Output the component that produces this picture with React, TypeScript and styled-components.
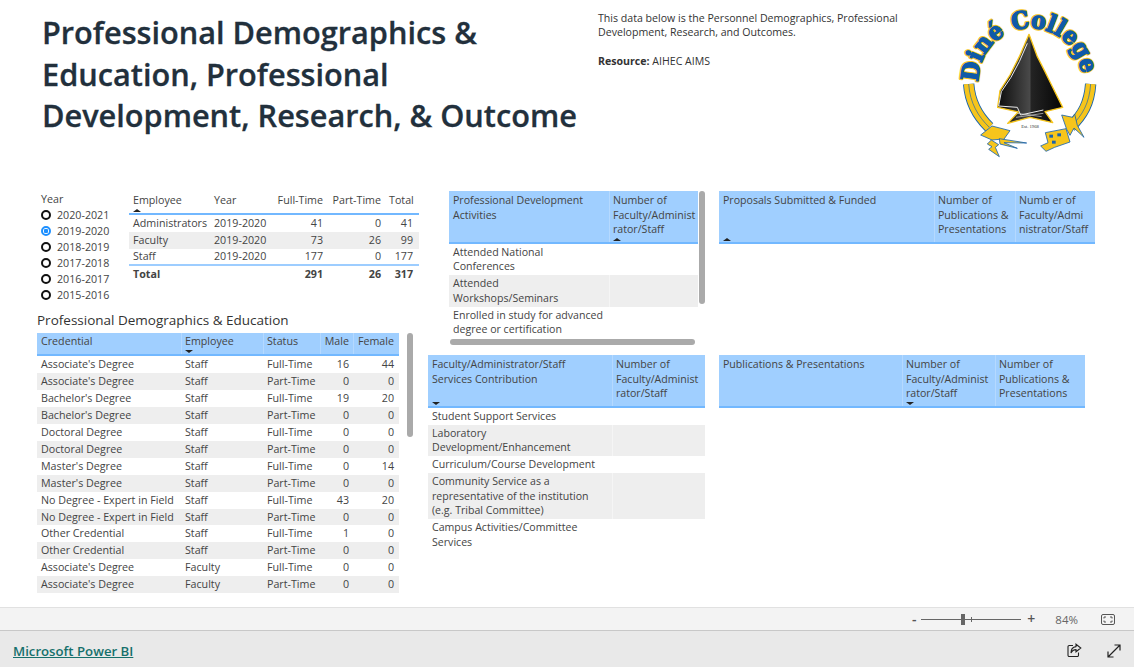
import React from "react";
import styled, { createGlobalStyle } from "styled-components";

const Global = createGlobalStyle`
  html, body { margin: 0; padding: 0; background: #fff; }
  body { font-family: "Open Sans", "Noto Sans", sans-serif; color: #3a3a3a; }
  * { box-sizing: border-box; }
`;

const Page = styled.div`
  width: 1134px; height: 667px; display: flex; flex-direction: column; overflow: hidden;
`;
const Canvas = styled.main`
  flex: 0 0 607px; height: 607px; display: flex; flex-direction: column; overflow: hidden;
`;
const Header = styled.header`
  flex: 0 0 191px; display: flex;
`;
const Title = styled.h1`
  flex: 0 0 598px; margin: 0; padding: 12px 0 0 42px; font-size: 30.7px; line-height: 41.5px;
  font-weight: 600; color: #22303c; white-space: nowrap; -webkit-text-stroke: 0.3px #22303c;
`;
const Intro = styled.div`
  flex: 0 0 332px; padding: 11px 30px 0 0; font-size: 10.6px; line-height: 14px; color: #333;
  p { margin: 0 0 15px; }
  b { font-weight: 700; }
`;
const Logo = styled.svg`
  flex: 0 0 204px; width: 204px; height: 170px;
`;
const Body = styled.div`
  flex: 1; display: flex; min-height: 0;
`;
const LeftCol = styled.section`
  flex: 0 0 428px; padding-left: 37px; display: flex; flex-direction: column;
`;
const TopRow = styled.div`
  display: flex; height: 122px; align-items: flex-start;
`;
const Slicer = styled.div`
  width: 92px; padding: 2px 0 0 4px; font-size: 10.7px;
`;
const SlicerTitle = styled.div`
  line-height: 13px; height: 14px; color: #444;
`;
const SlicerItem = styled.div`
  display: flex; align-items: center; gap: 6px; height: 16px; color: #444;
`;
const Radio = styled.span<{ $on?: boolean }>`
  width: 10px; height: 10px; border-radius: 50%; flex: none;
  border: 2px solid ${(p) => (p.$on ? "#1e90ff" : "#111")};
  background: ${(p) => (p.$on ? "radial-gradient(circle, #1e90ff 0 2px, #fff 2.5px)" : "#fff")};
`;
const Summary = styled.div`
  width: 290px; font-size: 10.7px; color: #444;
`;
const Grid = styled.div<{ $cols: string; $h?: number; $alt?: boolean; $line?: string; $bold?: boolean }>`
  display: grid; grid-template-columns: ${(p) => p.$cols};
  ${(p) => (p.$h ? `height: ${p.$h}px;` : "")}
  background: ${(p) => (p.$alt ? "#eeeeee" : "transparent")};
  ${(p) => (p.$line ? `border-bottom: 2px solid ${p.$line};` : "")}
  ${(p) => (p.$bold ? "font-weight: 700;" : "")}
`;
const Cell = styled.div<{ $right?: boolean }>`
  padding: 0 4px 1px; display: flex; align-items: center; white-space: nowrap;
  justify-content: ${(p) => (p.$right ? "flex-end" : "flex-start")};
`;
const HeadCell = styled.div<{ $right?: boolean; $pt: number }>`
  padding: ${(p) => p.$pt}px 4px 0; display: flex; flex-direction: column; line-height: 14.5px;
  text-align: ${(p) => (p.$right ? "right" : "left")};
  min-width: 0;
  & + & { border-left: 1px solid rgba(255, 255, 255, 0.22); padding-left: 3px; }
`;
const SummaryHeadCell = styled(HeadCell)`
  white-space: nowrap;
  && { border-left: 0; padding: 2px 4px 0; }
`;
const Mark = styled.span<{ $up?: boolean }>`
  display: block; width: 0; height: 0; margin-top: auto; margin-bottom: 1px;
  border-left: 4px solid transparent; border-right: 4px solid transparent;
  ${(p) => (p.$up ? "border-bottom: 3px solid #222;" : "border-top: 3px solid #222;")}
`;
const SectionTitle = styled.h2`
  margin: 0; height: 20px; font-size: 13.5px; font-weight: 400; line-height: 15px; color: #333;
`;
const DemoWrap = styled.div`
  display: flex; gap: 8px; align-items: flex-start;
`;
const DemoTable = styled.div`
  width: 362px; font-size: 10.7px; color: #444;
`;
const BlueHead = styled(Grid)`
  background: #a0cfff; border-bottom: 2px solid #72b8ff; color: #444;
`;
const DemoRow = styled(Grid)`
  height: 16.92px; line-height: 14px;
`;
const VBar = styled.div<{ $h: number }>`
  width: 6px; height: ${(p) => p.$h}px; border-radius: 3px; background: #aaaaaa; flex: none;
`;
const RightCol = styled.section`
  flex: 1; display: flex; flex-direction: column;
`;
const RightRow = styled.div`
  display: flex; height: 164px;
`;
const SlotA = styled.div<{ $inset?: number }>`
  flex: 0 0 291px; padding-left: ${(p) => p.$inset ?? 0}px;
`;
const TextTable = styled.div<{ $w: number }>`
  width: ${(p) => p.$w}px; font-size: 10.6px; color: #444;
`;
const TextRow = styled(Grid)`
  line-height: 14.4px;
`;
const TextCell = styled.div`
  padding: 1px 4px 1.6px; min-width: 0; white-space: nowrap;
  & + & { border-left: 1px solid rgba(255, 255, 255, 0.4); }
`;
const ScrollBox = styled.div`
  display: flex; gap: 1px; align-items: flex-start; height: 147px;
`;
const Clip = styled.div`
  height: 147px; overflow: hidden;
`;
const HBar = styled.div`
  width: 245px; height: 6px; margin: 1px 0 0 1px; border-radius: 3px; background: #aaaaaa;
`;
const ZoomBar = styled.div`
  flex: 0 0 24px; display: flex; align-items: center; justify-content: flex-end;
  background: #f3f3f3; border-top: 1px solid #e1e1e1; border-bottom: 1px solid #c8c8c8;
  color: #666; font-size: 12px; padding-right: 19px;
`;
const ZoomSign = styled.span`
  font-size: 14px; line-height: 14px; color: #555; width: 10px; text-align: center; font-weight: 600;
`;
const Track = styled.div`
  position: relative; width: 100px; height: 1px; background: #666; margin: 0 5px 0 2px;
`;
const Thumb = styled.span`
  position: absolute; left: 40px; top: -5px; width: 4px; height: 11px; background: #666;
`;
const Tick = styled.span`
  position: absolute; left: 50px; top: -2px; width: 1px; height: 5px; background: #666;
`;
const Percent = styled.span`
  margin: 0 23px 0 19px; font-size: 11.5px; color: #666;
`;
const Footer = styled.footer`
  flex: 1; display: flex; align-items: center; background: #e9e9e9; padding: 3px 13px 0 13px; gap: 25px;
`;
const PowerLink = styled.a`
  margin-right: auto; color: #16706c; font-size: 13.2px; font-weight: 600; text-decoration: underline;
`;

type Col = { label: string; right?: boolean; mark?: "up" | "down" };

const summaryCols = "81px 63px 54px 58px 32px 2px";
const demoCols = "144px 82px 57px 33px 45px 1px";

const demoData: [string, string, string, number, number][] = [
  ["Associate's Degree", "Staff", "Full-Time", 16, 44],
  ["Associate's Degree", "Staff", "Part-Time", 0, 0],
  ["Bachelor's Degree", "Staff", "Full-Time", 19, 20],
  ["Bachelor's Degree", "Staff", "Part-Time", 0, 0],
  ["Doctoral Degree", "Staff", "Full-Time", 0, 0],
  ["Doctoral Degree", "Staff", "Part-Time", 0, 0],
  ["Master's Degree", "Staff", "Full-Time", 0, 14],
  ["Master's Degree", "Staff", "Part-Time", 0, 0],
  ["No Degree - Expert in Field", "Staff", "Full-Time", 43, 20],
  ["No Degree - Expert in Field", "Staff", "Part-Time", 0, 0],
  ["Other Credential", "Staff", "Full-Time", 1, 0],
  ["Other Credential", "Staff", "Part-Time", 0, 0],
  ["Associate's Degree", "Faculty", "Full-Time", 0, 0],
  ["Associate's Degree", "Faculty", "Part-Time", 0, 0],
];

const summaryData: [string, string, number, number, number][] = [
  ["Administrators", "2019-2020", 41, 0, 41],
  ["Faculty", "2019-2020", 73, 26, 99],
  ["Staff", "2019-2020", 177, 0, 177],
];

const years = ["2020-2021", "2019-2020", "2018-2019", "2017-2018", "2016-2017", "2015-2016"];

function Head({ cols, template, h }: { cols: Col[]; template: string; h: number }) {
  return (
    <BlueHead $cols={template} $h={h}>
      {cols.map((c) => (
        <HeadCell key={c.label} $right={c.right} $pt={h < 30 ? 1 : 2}>
          <span>{c.label}</span>
          {c.mark && <Mark $up={c.mark === "up"} />}
        </HeadCell>
      ))}
    </BlueHead>
  );
}

function TextBody({ rows, template }: { rows: string[][]; template: string }) {
  return (
    <>
      {rows.map((lines, i) => (
        <TextRow key={i} $cols={template} $alt={i % 2 === 1}>
          <TextCell>
            {lines.map((l, j) => (
              <React.Fragment key={l}>
                {j > 0 && <br />}
                {l}
              </React.Fragment>
            ))}
          </TextCell>
          <TextCell />
        </TextRow>
      ))}
    </>
  );
}

function DineLogo() {
  return (
    <Logo viewBox="0 0 612 510" role="img" aria-label="Diné College logo">
      <defs>
        <linearGradient id="rock" x1="0" x2="1" y1="0" y2="0">
          <stop offset="0" stopColor="#0c0c0c" />
          <stop offset="0.5" stopColor="#4a4a4a" />
          <stop offset="0.51" stopColor="#242424" />
          <stop offset="1" stopColor="#050505" />
        </linearGradient>
        <path id="arc" d="M146 246 A154 154 0 0 1 455 232" />
      </defs>
      <path
        d="M297 103 L322 170 L345 215 L362 250 L398 322 L345 335 L368 368 L300 352 L233 370 L265 336 L203 322 L210 272 L240 225 L268 170 Z"
        fill="url(#rock)" stroke="#f6c51c" strokeWidth="4" strokeLinejoin="round"
      />
      <path d="M292 130 L268 185 L243 232 L214 275 L206 318 L262 322 L272 345 L340 330" fill="none" stroke="#e8e8e8" strokeWidth="3" />
      <path d="M258 352 L340 340 M262 340 L335 350" stroke="#d8d8d8" strokeWidth="2" fill="none" />
      <text fontFamily="'DejaVu Serif', serif" fontWeight="700" fontSize="72" fill="#0f5aa8" stroke="#f6c51c" strokeWidth="10" paintOrder="stroke" strokeLinejoin="round">
        <textPath href="#arc" textLength="476" lengthAdjust="spacingAndGlyphs">Diné College</textPath>
      </text>
      <text fontFamily="'DejaVu Serif', serif" fontWeight="700" fontSize="72" fill="#0f5aa8" stroke="#0f5aa8" strokeWidth="4" strokeLinejoin="round" aria-hidden="true">
        <textPath href="#arc" textLength="476" lengthAdjust="spacingAndGlyphs">Diné College</textPath>
      </text>
      <g fill="none">
        <path d="M116 252 C120 310 145 350 178 382" stroke="#1a64ad" strokeWidth="34" />
        <path d="M116 252 C120 310 145 350 178 382" stroke="#f6c51c" strokeWidth="29" />
        <path d="M116 252 C120 310 145 350 178 382" stroke="#1a64ad" strokeWidth="2" />
        <path d="M482 252 C478 310 458 345 422 380" stroke="#1a64ad" strokeWidth="34" />
        <path d="M482 252 C478 310 458 345 422 380" stroke="#f6c51c" strokeWidth="29" />
        <path d="M482 252 C478 310 458 345 422 380" stroke="#1a64ad" strokeWidth="2" />
      </g>
      <g fill="#f6c51c" stroke="#1a64ad" strokeWidth="2.500" strokeLinejoin="round">
        <path d="M152 405 L186 378 L240 392 L220 420 L208 418 L186 420 Z" />
        <path d="M208 416 L290 429 L222 428 L262 445 L210 432 Z" />
        <path d="M184 420 L206 434 L196 442 L208 470 L176 448 L186 440 L172 432 Z" />
        <path d="M346 398 L408 386 L420 426 L374 442 L348 454 L332 438 L354 428 Z" />
        <path d="M410 388 L395 345 L428 352 L434 342 L442 376 L462 412 L432 384 L420 406 Z" />
      </g>
      <g fill="#1a64ad">
        <rect x="358" y="404" width="11" height="9" />
        <rect x="382" y="400" width="11" height="9" />
        <rect x="366" y="422" width="11" height="9" />
      </g>
      <text x="300" y="383" textAnchor="middle" fontFamily="'Liberation Serif', serif" fontSize="14" fill="#333">Est. 1968</text>
    </Logo>
  );
}

const summaryHead: Col[] = [
  { label: "Employee", mark: "up" },
  { label: "Year" },
  { label: "Full-Time", right: true },
  { label: "Part-Time", right: true },
  { label: "Total", right: true },
];

export default function App() {
  return (
    <Page>
      <Global />
      <Canvas>
        <Header>
          <Title>
            Professional Demographics &amp;
            <br />
            Education, Professional
            <br />
            Development, Research, &amp; Outcome
          </Title>
          <Intro>
            <p>This data below is the Personnel Demographics, Professional Development, Research, and Outcomes.</p>
            <p><b>Resource:</b> AIHEC AIMS</p>
          </Intro>
          <DineLogo />
        </Header>
        <Body>
          <LeftCol>
            <TopRow>
              <Slicer>
                <SlicerTitle>Year</SlicerTitle>
                {years.map((y) => (
                  <SlicerItem key={y}>
                    <Radio $on={y === "2019-2020"} />
                    {y}
                  </SlicerItem>
                ))}
              </Slicer>
              <Summary>
                <Grid $cols={summaryCols} $h={24} $line="#72b8ff">
                  {summaryHead.map((c) => (
                    <SummaryHeadCell key={c.label} $right={c.right} $pt={2}>
                      <span>{c.label}</span>
                      {c.mark && <Mark $up={c.mark === "up"} />}
                    </SummaryHeadCell>
                  ))}
                </Grid>
                {summaryData.map((r, i) => (
                  <Grid key={r[0]} $cols={summaryCols} $h={17} $alt={i === 1} $line={i === 2 ? "#9dcdff" : undefined}>
                    <Cell>{r[0]}</Cell>
                    <Cell>{r[1]}</Cell>
                    <Cell $right>{r[2]}</Cell>
                    <Cell $right>{r[3]}</Cell>
                    <Cell $right>{r[4]}</Cell>
                  </Grid>
                ))}
                <Grid $cols={summaryCols} $h={17} $bold>
                  <Cell>Total</Cell>
                  <Cell />
                  <Cell $right>291</Cell>
                  <Cell $right>26</Cell>
                  <Cell $right>317</Cell>
                </Grid>
              </Summary>
            </TopRow>
            <SectionTitle>Professional Demographics &amp; Education</SectionTitle>
            <DemoWrap>
              <DemoTable>
                <Head
                  template={demoCols}
                  h={23.4}
                  cols={[
                    { label: "Credential" },
                    { label: "Employee", mark: "down" },
                    { label: "Status" },
                    { label: "Male", right: true },
                    { label: "Female", right: true },
                  ]}
                />
                {demoData.map((r, i) => (
                  <DemoRow key={i} $cols={demoCols} $alt={i % 2 === 1}>
                    <Cell>{r[0]}</Cell>
                    <Cell>{r[1]}</Cell>
                    <Cell>{r[2]}</Cell>
                    <Cell $right>{r[3]}</Cell>
                    <Cell $right>{r[4]}</Cell>
                  </DemoRow>
                ))}
              </DemoTable>
              <VBar $h={104} />
            </DemoWrap>
          </LeftCol>
          <RightCol>
            <RightRow>
              <SlotA $inset={21}>
                <ScrollBox>
                  <Clip>
                    <TextTable $w={249}>
                      <Head
                        template="160px 89px"
                        h={53}
                        cols={[
                          { label: "Professional Development Activities" },
                          { label: "Number of Faculty/Administ rator/Staff", mark: "up" },
                        ]}
                      />
                      <TextBody
                        template="160px 89px"
                        rows={[
                          ["Attended National", "Conferences"],
                          ["Attended", "Workshops/Seminars"],
                          ["Enrolled in study for advanced", "degree or certification"],
                          ["\u00a0"],
                        ]}
                      />
                    </TextTable>
                  </Clip>
                  <VBar $h={113} />
                </ScrollBox>
                <HBar />
              </SlotA>
              <TextTable $w={376}>
                <Head
                  template="215px 81px 80px"
                  h={53}
                  cols={[
                    { label: "Proposals Submitted & Funded", mark: "up" },
                    { label: "Number of Publications & Presentations" },
                    { label: "Numb er of Faculty/Admi nistrator/Staff" },
                  ]}
                />
              </TextTable>
            </RightRow>
            <RightRow>
              <SlotA>
                <TextTable $w={277}>
                  <Head
                    template="184px 93px"
                    h={53}
                    cols={[
                      { label: "Faculty/Administrator/Staff Services Contribution", mark: "down" },
                      { label: "Number of Faculty/Administ rator/Staff" },
                    ]}
                  />
                  <TextBody
                    template="184px 93px"
                    rows={[
                      ["Student Support Services"],
                      ["Laboratory", "Development/Enhancement"],
                      ["Curriculum/Course Development"],
                      ["Community Service as a", "representative of the institution", "(e.g. Tribal Committee)"],
                      ["Campus Activities/Committee", "Services"],
                    ]}
                  />
                </TextTable>
              </SlotA>
              <TextTable $w={366}>
                <Head
                  template="183px 93px 90px"
                  h={53}
                  cols={[
                    { label: "Publications & Presentations" },
                    { label: "Number of Faculty/Administ rator/Staff", mark: "down" },
                    { label: "Number of Publications & Presentations" },
                  ]}
                />
              </TextTable>
            </RightRow>
          </RightCol>
        </Body>
      </Canvas>
      <ZoomBar>
        <ZoomSign>-</ZoomSign>
        <Track>
          <Thumb />
          <Tick />
        </Track>
        <ZoomSign>+</ZoomSign>
        <Percent>84%</Percent>
        <svg width="14" height="11" viewBox="0 0 14 11" fill="none" stroke="#555">
          <rect x="0.5" y="0.5" width="13" height="10" rx="1.500" />
          <path d="M3 4.500V3h2M9 3h2v1.500M11 6.500V8H9M5 8H3V6.500" />
        </svg>
      </ZoomBar>
      <Footer>
        <PowerLink href="#">Microsoft Power BI</PowerLink>
        <svg width="15" height="15" viewBox="0 0 15 15" fill="none" stroke="#222" strokeWidth="1.1">
          <path d="M6 2.500H2.200A1.200 1.200 0 0 0 1 3.700v8.600a1.200 1.200 0 0 0 1.200 1.200h8.100a1.200 1.200 0 0 0 1.200-1.200V9.500" />
          <path d="M9 1.200l4.800 3.800L9 8.800V6.600C6.600 6.600 5 7.800 4 10c0-3.600 1.800-6 5-6.400z" />
        </svg>
        <svg width="14" height="14" viewBox="0 0 14 14" fill="none" stroke="#222" strokeWidth="1.2">
          <path d="M1 13L13 1M7.500 1H13V6.500M1 7.500V13H6.500" />
        </svg>
      </Footer>
    </Page>
  );
}
